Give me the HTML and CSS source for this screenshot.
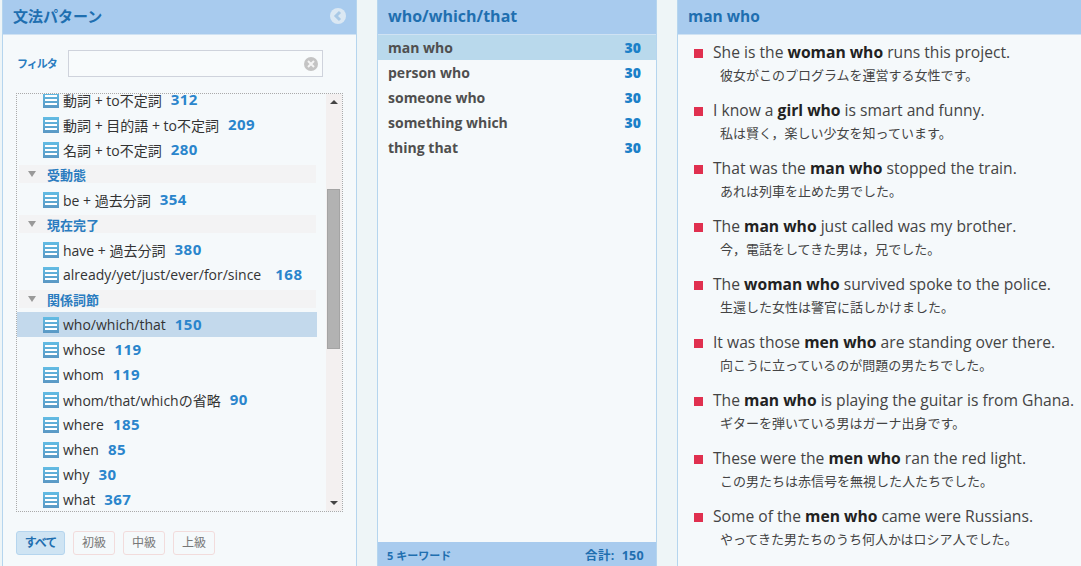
FILE: index.html
```html
<!DOCTYPE html>
<html lang="ja">
<head>
    <meta charset="UTF-8">
    <title>文法パターン</title>
    <link rel="stylesheet" href="styles.css">
</head>
<body>
    <svg class="defs" width="0" height="0">
        <linearGradient id="ico-fill" x1="0" y1="0" x2="0" y2="1">
            <stop offset="0" stop-color="#62bce4"/>
            <stop offset="1" stop-color="#5a98c4"/>
        </linearGradient>
        <symbol id="list-icon" viewBox="0 0 16 16">
            <rect width="16" height="16" fill="url(#ico-fill)"/>
            <rect x="2" y="3" width="12" height="2" fill="#fff"/>
            <rect x="2" y="7" width="12" height="2" fill="#fff"/>
            <rect x="2" y="11" width="12" height="2" fill="#fff"/>
        </symbol>
    </svg>
    <section class="panel side">
        <div class="head">
            <h2>文法パターン</h2>
            <svg class="collapse" width="16" height="16" viewBox="0 0 16 16">
                <circle cx="8" cy="8" r="8" fill="#dbe8f3"/>
                <path d="M10 4 6 8 10 12" fill="none" stroke="#a9c9e6" stroke-width="3"/>
            </svg>
        </div>
        <div class="filter">
            <label>フィルタ</label>
            <div class="filter-box">
                <svg width="14" height="14" viewBox="0 0 14 14">
                    <circle cx="7" cy="7" r="7" fill="#c4c4c4"/>
                    <path d="M4 4l6 6M10 4l-6 6" stroke="#f4f4f4" stroke-width="2"/>
                </svg>
            </div>
        </div>
        <div class="tree">
            <ul class="tree-list">
                <li class="leaf clipped"><svg class="ico"><use href="#list-icon"/></svg>動詞 + to不定詞<b>312</b></li>
                <li class="leaf"><svg class="ico"><use href="#list-icon"/></svg>動詞 + 目的語 + to不定詞<b>209</b></li>
                <li class="leaf"><svg class="ico"><use href="#list-icon"/></svg>名詞 + to不定詞<b>280</b></li>
                <li class="group">受動態</li>
                <li class="leaf"><svg class="ico"><use href="#list-icon"/></svg>be + 過去分詞<b>354</b></li>
                <li class="group">現在完了</li>
                <li class="leaf"><svg class="ico"><use href="#list-icon"/></svg>have + 過去分詞<b>380</b></li>
                <li class="leaf"><svg class="ico"><use href="#list-icon"/></svg>already/yet/just/ever/for/since<b class="far">168</b></li>
                <li class="group">関係詞節</li>
                <li class="leaf active"><svg class="ico"><use href="#list-icon"/></svg>who/which/that<b>150</b></li>
                <li class="leaf"><svg class="ico"><use href="#list-icon"/></svg>whose<b>119</b></li>
                <li class="leaf"><svg class="ico"><use href="#list-icon"/></svg>whom<b>119</b></li>
                <li class="leaf"><svg class="ico"><use href="#list-icon"/></svg>whom/that/whichの省略<b>90</b></li>
                <li class="leaf"><svg class="ico"><use href="#list-icon"/></svg>where<b>185</b></li>
                <li class="leaf"><svg class="ico"><use href="#list-icon"/></svg>when<b>85</b></li>
                <li class="leaf"><svg class="ico"><use href="#list-icon"/></svg>why<b>30</b></li>
                <li class="leaf"><svg class="ico"><use href="#list-icon"/></svg>what<b>367</b></li>
            </ul>
            <div class="scrollbar">
                <span class="arrow-up"></span>
                <div class="track"><div class="thumb"></div></div>
                <span class="arrow-down"></span>
            </div>
        </div>
        <div class="levels">
            <a class="on">すべて</a>
            <a>初級</a>
            <a>中級</a>
            <a>上級</a>
        </div>
    </section>

    <section class="panel middle">
        <div class="head"><h2>who/which/that</h2></div>
        <ul class="keywords">
            <li class="active">man who<b>30</b></li>
            <li>person who<b>30</b></li>
            <li>someone who<b>30</b></li>
            <li>something which<b>30</b></li>
            <li>thing that<b>30</b></li>
        </ul>
        <div class="foot"><span class="kw-count">5 キーワード</span><span class="kw-total">合計:&nbsp; 150</span></div>
    </section>

    <section class="panel main">
        <div class="head"><h2>man who</h2></div>
        <ul class="sentences">
            <li><p>She is the <b>woman who</b> runs this project.</p><p class="ja">彼女がこのプログラムを運営する女性です。</p></li>
            <li><p>I know a <b>girl who</b> is smart and funny.</p><p class="ja">私は賢く，楽しい少女を知っています。</p></li>
            <li><p>That was the <b>man who</b> stopped the train.</p><p class="ja">あれは列車を止めた男でした。</p></li>
            <li><p>The <b>man who</b> just called was my brother.</p><p class="ja">今，電話をしてきた男は，兄でした。</p></li>
            <li><p>The <b>woman who</b> survived spoke to the police.</p><p class="ja">生還した女性は警官に話しかけました。</p></li>
            <li><p>It was those <b>men who</b> are standing over there.</p><p class="ja">向こうに立っているのが問題の男たちでした。</p></li>
            <li><p>The <b>man who</b> is playing the guitar is from Ghana.</p><p class="ja">ギターを弾いている男はガーナ出身です。</p></li>
            <li><p>These were the <b>men who</b> ran the red light.</p><p class="ja">この男たちは赤信号を無視した人たちでした。</p></li>
            <li><p>Some of the <b>men who</b> came were Russians.</p><p class="ja">やってきた男たちのうち何人かはロシア人でした。</p></li>
        </ul>
    </section>
</body>
</html>
```

FILE: styles.css
```css
html, body { height: 100%; }
body {
    margin: 0;
    padding: 0 0 0 2px;
    height: 566px;
    box-sizing: border-box;
    overflow: hidden;
    display: flex;
    gap: 20px;
    background: #eef5f7;
    font-family: "Open Sans", "Noto Sans CJK JP", sans-serif;
    color: #444;
}
ul { list-style: none; margin: 0; padding: 0; }
p, h2 { margin: 0; }
.defs { position: absolute; }

.panel {
    display: flex;
    flex-direction: column;
    height: 566px;
    box-sizing: border-box;
    background: #f5f9fb;
    border-left: 1px solid #b5d5ee;
    border-right: 1px solid #b5d5ee;
}
.side { width: 355px; }
.middle { width: 280px; }
.main { flex: 1; border-right: 0; }

.head {
    height: 35px;
    flex: none;
    display: flex;
    align-items: center;
    justify-content: space-between;
    padding: 0 10px 3px 10px;
    background: #a8cbee;
    border-bottom: 1px solid #cfe2f3;
    box-sizing: border-box;
}
.head h2 {
    font-size: 15px;
    font-weight: bold;
    color: #1f6fb0;
}
.middle .head h2 { font-size: 16px; }
.main .head h2 { font-size: 15.5px; }

.filter {
    display: flex;
    align-items: center;
    margin: 15px 0 0 14px;
}
.filter label {
    width: 51px;
    margin-top: -2px;
    font-size: 11px;
    letter-spacing: -1px;
    font-weight: bold;
    color: #2a7cc0;
}
.filter-box {
    width: 255px;
    height: 27px;
    box-sizing: border-box;
    display: flex;
    align-items: center;
    justify-content: flex-end;
    padding-right: 4px;
    background: #f8fbfc;
    border: 1px solid #cfd3dc;
}

.tree {
    display: flex;
    justify-content: space-between;
    width: 327px;
    height: 419px;
    box-sizing: border-box;
    margin: 16px 0 0 13px;
    border: 1px dotted #aaa;
    overflow: hidden;
}
.tree-list {
    width: 300px;
    margin-top: -7px;
    font-size: 14px;
}
.tree-list li {
    display: flex;
    align-items: center;
    height: 25px;
    white-space: pre;
    color: #333;
}
.tree-list b {
    margin: 0 0 2px 9px;
    font-size: 15px;
    letter-spacing: 0.5px;
    color: #2a85cc;
}
.tree-list b.far { margin-left: 14px; }
.leaf { padding-left: 26px; }
.leaf.active { background: #c3d9ec; }
.ico { width: 16px; height: 16px; margin-right: 4px; flex: none; }
.tree-list .group {
    height: 18px;
    margin: 3px 1px 4px 2px;
    padding-left: 28px;
    position: relative;
    background: #f3f3f4;
    font-size: 13px;
    font-weight: bold;
    color: #2a7cc0;
}
.group::before {
    content: "";
    position: absolute;
    left: 9px;
    top: 6px;
    border-left: 4px solid transparent;
    border-right: 4px solid transparent;
    border-top: 6px solid #999;
}

.scrollbar {
    width: 16px;
    flex: none;
    display: flex;
    flex-direction: column;
    align-items: center;
    background: #f3f0f0;
}
.arrow-up, .arrow-down {
    flex: none;
    width: 0;
    margin: 6px 0;
    border-left: 4px solid transparent;
    border-right: 4px solid transparent;
}
.arrow-up { border-bottom: 4px solid #444; }
.arrow-down { border-top: 4px solid #444; }
.track { flex: 1; width: 100%; }
.thumb {
    width: 13px;
    height: 160px;
    margin: 79px 0 0 1px;
    background: #b2b2b2;
    border: 1px solid #a4a4a4;
    box-sizing: border-box;
}

.levels {
    display: flex;
    gap: 8px;
    margin: 19px 0 0 13px;
    font-size: 12px;
}
.levels a {
    width: 42px;
    height: 24px;
    line-height: 22px;
    text-align: center;
    box-sizing: border-box;
    border: 1px solid #f2dcdc;
    border-radius: 3px;
    color: #777;
}
.levels a.on {
    width: 49px;
    background: #cfe4f3;
    border-color: #b5d5ee;
    font-weight: bold;
    letter-spacing: -1px;
    color: #1f6fb0;
}

.keywords { flex: 1; font-size: 14px; font-weight: bold; }
.keywords li {
    display: flex;
    justify-content: space-between;
    align-items: center;
    height: 25px;
    padding: 0 15px 0 10px;
    color: #4f4f4f;
}
.keywords li.active { background: #b9d9ec; }
.keywords b { color: #1a80c8; }
.foot {
    height: 24px;
    flex: none;
    display: flex;
    justify-content: space-between;
    align-items: center;
    padding: 1px 12px 0 9px;
    box-sizing: border-box;
    background: #a8cbee;
    font-weight: bold;
    color: #1f6fb0;
}
.kw-count { font-size: 11px; }
.kw-total { font-size: 12.5px; letter-spacing: 0.3px; }

.sentences { padding: 7px 0 0 16px; }
.sentences li {
    position: relative;
    height: 58px;
    padding-left: 19px;
    white-space: nowrap;
    font-size: 15.65px;
    line-height: 20px;
}
.sentences li::before {
    content: "";
    position: absolute;
    left: 0;
    top: 7px;
    width: 9px;
    height: 9px;
    background: #e0304f;
}
.sentences b { color: #222; }
.sentences .ja {
    margin: 4px 0 0 7px;
    font-size: 13px;
    line-height: 18px;
}
```
